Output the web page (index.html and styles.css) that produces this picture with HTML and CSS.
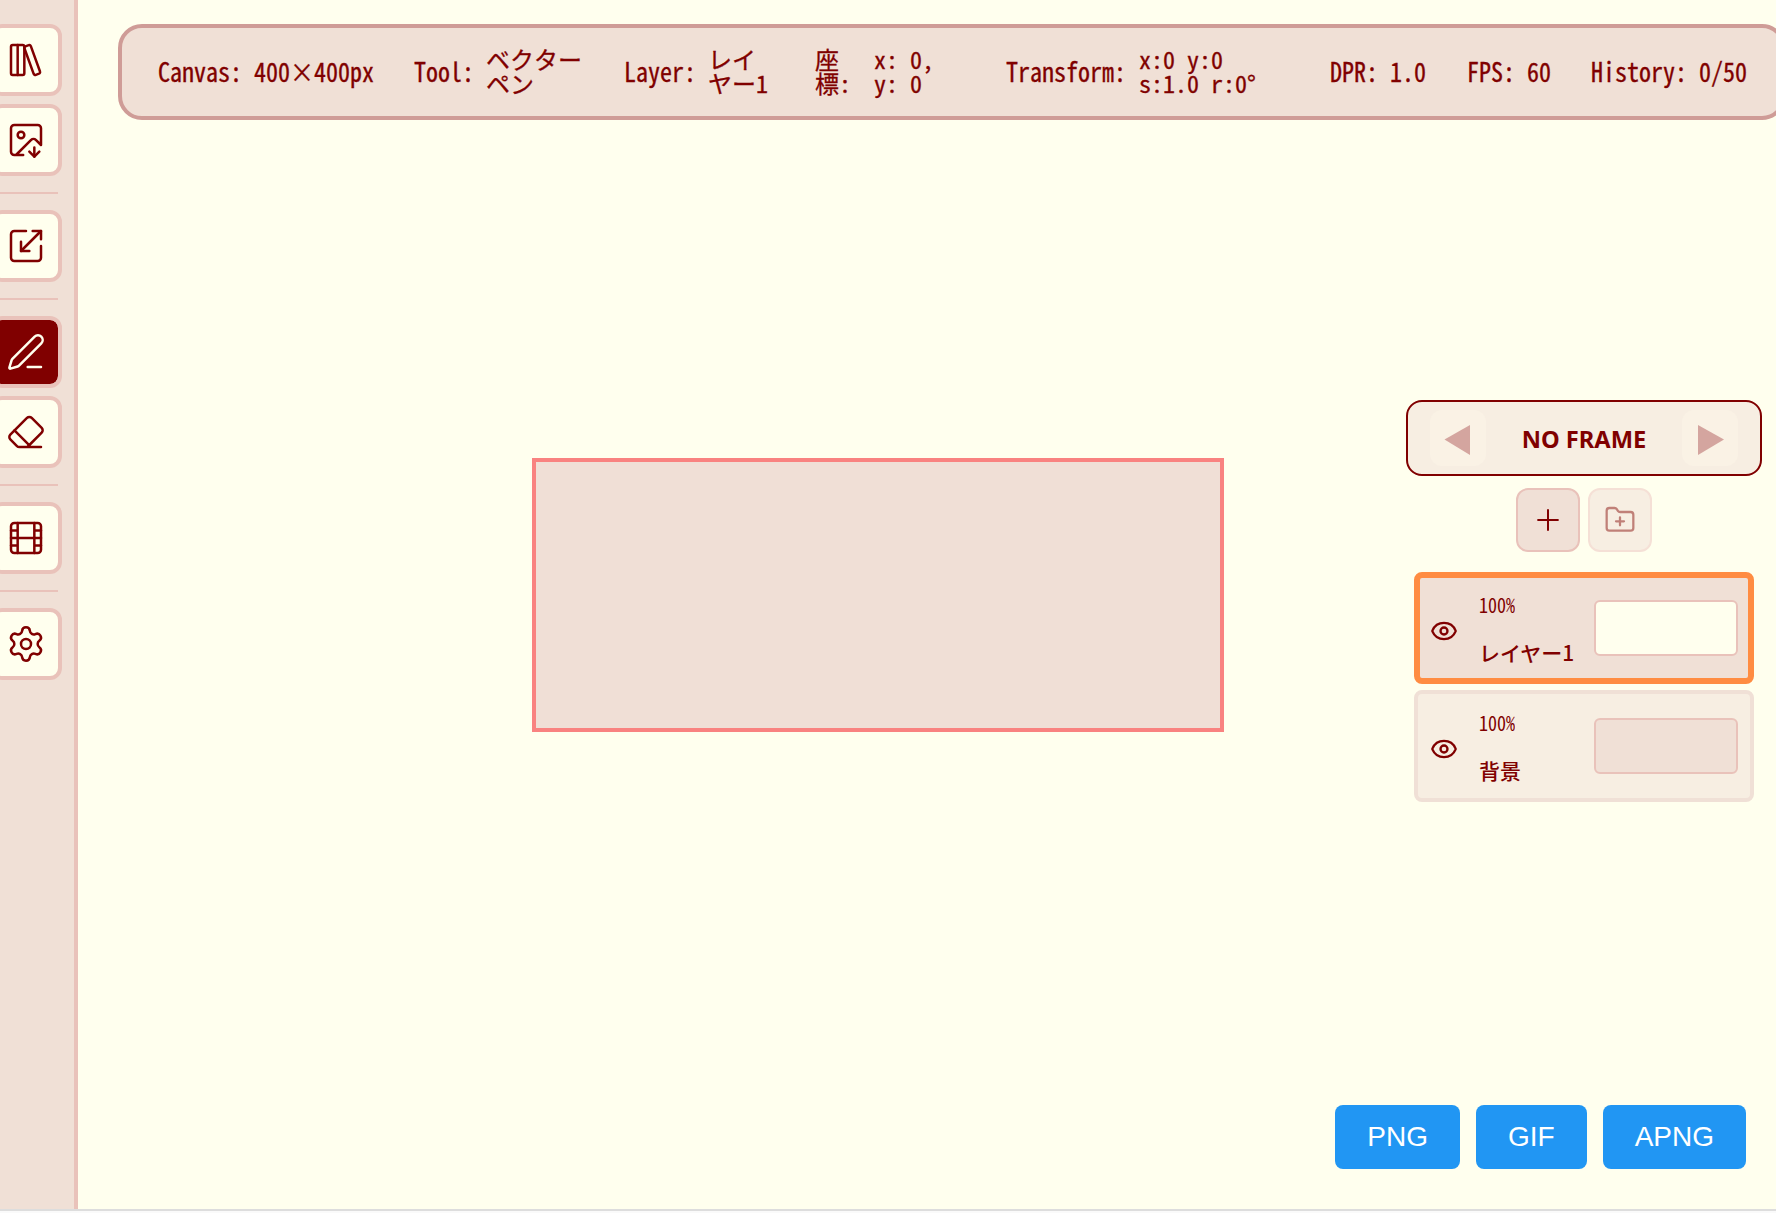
FILE: index.html
```html
<!DOCTYPE html>
<html lang="ja">
<head>
<meta charset="utf-8">
<title>Canvas</title>
<link rel="stylesheet" href="styles.css">
</head>
<body>
<div class="app">
  <nav class="sidebar">
    <button class="tool"><svg viewBox="0 0 24 24"><rect width="8" height="18" x="3" y="3" rx="1"/><path d="M7 3v18"/><path d="M20.4 18.9c.2.5-.1 1.1-.6 1.3l-1.9.7c-.5.2-1.1-.1-1.3-.6L11.1 5.1c-.2-.5.1-1.1.6-1.3l1.9-.7c.5-.2 1.1.1 1.3.6Z"/></svg></button>
    <button class="tool"><svg viewBox="0 0 24 24"><path d="M10.3 21H5a2 2 0 0 1-2-2V5a2 2 0 0 1 2-2h14a2 2 0 0 1 2 2v10l-3.1-3.1a2 2 0 0 0-2.814.014L6 21"/><path d="m14 19 3 3v-5.500"/><path d="m17 22 3-3"/><circle cx="9" cy="9" r="2"/></svg></button>
    <hr>
    <button class="tool"><svg viewBox="0 0 24 24"><path d="M21 12v7a2 2 0 0 1-2 2H5a2 2 0 0 1-2-2V5a2 2 0 0 1 2-2h7"/><path d="M16 3h5v5"/><path d="M21 3 9 15"/><path d="M9 9.500V15h5"/></svg></button>
    <hr>
    <button class="tool active"><svg viewBox="0 0 24 24"><path d="M13 21h8"/><path d="M21.174 6.812a1 1 0 0 0-3.986-3.987L3.842 16.174a2 2 0 0 0-.5.830l-1.321 4.352a.5.5 0 0 0 .623.622l4.353-1.320a2 2 0 0 0 .830-.497z"/></svg></button>
    <button class="tool"><svg viewBox="0 0 24 24"><path d="M21 21H8a2 2 0 0 1-1.420-.587l-3.994-3.999a2 2 0 0 1 0-2.828l10-10a2 2 0 0 1 2.829 0l5.999 6a2 2 0 0 1 0 2.828L12.834 21"/><path d="m5.082 11.090 8.828 8.828"/></svg></button>
    <hr>
    <button class="tool"><svg viewBox="0 0 24 24"><rect width="18" height="18" x="3" y="3" rx="2"/><path d="M7 3v18M3 7.500h4M3 12h18M3 16.500h4M17 3v18M17 7.500h4M17 16.500h4"/></svg></button>
    <hr>
    <button class="tool"><svg viewBox="0 0 24 24"><path d="M9.671 4.136a2.340 2.340 0 0 1 4.659 0 2.340 2.340 0 0 0 3.319 1.915 2.340 2.340 0 0 1 2.330 4.033 2.340 2.340 0 0 0 0 3.831 2.340 2.340 0 0 1-2.330 4.033 2.340 2.340 0 0 0-3.319 1.915 2.340 2.340 0 0 1-4.659 0 2.340 2.340 0 0 0-3.320-1.915 2.340 2.340 0 0 1-2.330-4.033 2.340 2.340 0 0 0 0-3.831A2.340 2.340 0 0 1 6.350 6.051a2.340 2.340 0 0 0 3.319-1.915"/><circle cx="12" cy="12" r="3"/></svg></button>
  </nav>

  <main class="workspace">
    <header class="status">
      <div class="tall">Canvas:</div><div class="tall">400×400px</div>
      <div class="tall">Tool:</div><div>ベクター<br>ペン</div>
      <div class="tall">Layer:</div><div>レイ<br>ヤー1</div>
      <div>座<br>標:</div><div class="pair">x: 0,<br>y: 0</div>
      <div class="tall">Transform:</div><div class="pair">x:0 y:0<br>s:1.0 r:0°</div>
      <div class="tall">DPR:</div><div class="tall">1.0</div>
      <div class="tall">FPS:</div><div class="tall">60</div>
      <div class="tall">History:</div><div class="tall">0/50</div>
    </header>

    <section class="stage"><div class="canvas"></div></section>

    <aside class="panel">
      <div class="frame-nav">
        <button class="step"><svg viewBox="0 0 56 56"><path d="M14.500 29.500 40 15v30z"/></svg></button>
        <span class="frame-name">NO FRAME</span>
        <button class="step"><svg viewBox="0 0 56 56"><path d="M42 29.500 16 15v30z"/></svg></button>
      </div>
      <div class="layer-actions">
        <button class="add"><svg width="28" height="28" viewBox="0 0 24 24"><path d="M3.500 12h17M12 3.500v17"/></svg></button>
        <button class="add disabled"><svg width="32" height="32" viewBox="0 0 24 24"><path d="M12 10v6M9 13h6"/><path d="M20 20a2 2 0 0 0 2-2V8a2 2 0 0 0-2-2h-7.900a2 2 0 0 1-1.690-.9L9.600 3.900A2 2 0 0 0 7.930 3H4a2 2 0 0 0-2 2v13a2 2 0 0 0 2 2Z"/></svg></button>
      </div>
      <div class="layer selected">
        <svg class="eye" viewBox="0 0 24 24"><path d="M2.062 12.348a1 1 0 0 1 0-.696 10.750 10.750 0 0 1 19.876 0 1 1 0 0 1 0 .696 10.750 10.750 0 0 1-19.876 0"/><circle cx="12" cy="12" r="3"/></svg>
        <div class="info"><span class="opacity">100%</span><span class="name">レイヤー1</span></div>
        <div class="thumb"></div>
      </div>
      <div class="layer background">
        <svg class="eye" viewBox="0 0 24 24"><path d="M2.062 12.348a1 1 0 0 1 0-.696 10.750 10.750 0 0 1 19.876 0 1 1 0 0 1 0 .696 10.750 10.750 0 0 1-19.876 0"/><circle cx="12" cy="12" r="3"/></svg>
        <div class="info"><span class="opacity">100%</span><span class="name">背景</span></div>
        <div class="thumb"></div>
      </div>
    </aside>

    <footer class="exports"><button>PNG</button><button>GIF</button><button>APNG</button></footer>
  </main>
</div>
</body>
</html>
```
FILE: styles.css
```css
* { box-sizing: border-box; }
body { margin: 0; height: 1213px; overflow: hidden; background: #fafafa; color: #800000; font-family: "Noto Sans CJK JP", sans-serif; }
button { font: inherit; color: inherit; padding: 0; margin: 0; }
svg { display: block; fill: none; stroke: currentColor; stroke-linecap: round; stroke-linejoin: round; }
.app { display: flex; height: 1211px; border-bottom: 2px solid #ddd; background: #ffffee; overflow: hidden; }

.sidebar { flex: none; width: 78px; padding-top: 24px; background: #f0e0d6; border-right: 4px solid #e9c2ba; display: flex; flex-direction: column; gap: 8px; }
.tool { flex: none; width: 72px; height: 72px; margin-left: -10px; border: 4px solid #e9c2ba; border-radius: 12px; background: #ffffee; display: flex; align-items: center; justify-content: center; }
.tool svg { width: 40px; height: 40px; stroke-width: 1.5; }
.tool.active { background: #800000; background-clip: padding-box; color: #ffffee; }
.sidebar hr { flex: none; width: 58px; height: 2px; margin: 8px 0; border: 0; background: #e9c2ba; }

.workspace { flex: 1; min-width: 0; display: grid; grid-template-columns: 1328px 356px; grid-template-rows: 120px 1fr 104px; }
.status { grid-column: 1 / 3; width: 1668px; height: 96px; margin: 24px 0 0 40px; padding: 0 0 2px 36px; background: #f0e0d6; border: 4px solid #cf9c97; border-radius: 24px; display: grid; grid-template-columns: 96px 160px 72px 138px 84px 107px 59px 132px 133px 191px 60px 77px 60px 64px 108px 60px; align-items: center; font: 500 24px/24px "Noto Sans Mono CJK JP", "Noto Sans CJK JP", monospace; -webkit-text-stroke: 0.300px #800000; white-space: nowrap; }
.tall { transform: scaleY(1.1); }
.pair { line-height: 24px; }

.stage { padding: 338px 0 0 454px; }
.canvas { width: 692px; height: 274px; border: 4px solid #f98280; background: #f0dfd6; }

.panel { padding-top: 280px; display: flex; flex-direction: column; align-items: center; }
.frame-nav { width: 356px; height: 76px; padding: 0 22px; background: #f7eee2; border: 2px solid #800000; border-radius: 16px; display: flex; align-items: center; justify-content: space-between; }
.frame-name { padding-top: 2px; font: 700 23.700px/32px "Noto Sans", sans-serif; }
.step { width: 56px; height: 56px; border: 0; border-radius: 12px; background: #faf2e5; color: #d4a59f; }
.step path { fill: currentColor; stroke: none; }
.layer-actions { display: flex; gap: 8px; margin: 12px 0 20px; }
.add { width: 64px; height: 64px; border: 2px solid #e9c2ba; border-radius: 12px; background: #f0e0d6; display: flex; align-items: center; justify-content: center; }
.add svg { stroke-width: 1.7; }
.add.disabled { background: #f7eee2; border-color: #f5e0d6; color: #c08078; }
.layer { width: 340px; height: 112px; margin-bottom: 6px; border: 4px solid #f0e0d6; border-radius: 8px; background: #f7eee2; display: grid; grid-template-columns: 28px 1fr 144px; padding: 0 12px; align-items: center; }
.layer.selected { border: 6px solid #ff8c42; background: #f0e0d6; padding: 0 10px; }
.eye { width: 28px; height: 28px; margin-top: 5px; stroke-width: 2; }
.info { display: flex; flex-direction: column; padding-left: 21px; gap: 24px; }
.opacity { font: 400 18px/24px "Noto Sans Mono CJK JP", "Noto Sans CJK JP", monospace; transform: scaleY(1.16); margin-top: -1px; }
.name { font: 500 21px/24px "Noto Sans CJK JP", sans-serif; white-space: nowrap; }
.thumb { height: 56px; margin-top: -1px; border: 2px solid #e9c2ba; border-radius: 6px; background: #ffffee; }
.background .thumb { background: #f0e0d6; }

.exports { grid-column: 1 / 3; width: 1684px; display: flex; gap: 16px; justify-content: flex-end; padding-right: 16px; }
.exports button { height: 64px; padding: 0 32px 1px; border: 0; border-radius: 8px; background: #2196f3; color: #fff; font: 28px/32px "Liberation Sans", Arial, sans-serif; }
```
